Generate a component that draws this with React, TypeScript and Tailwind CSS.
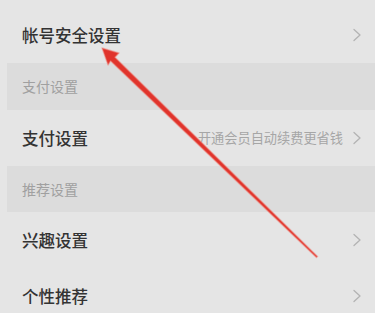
import { ReactNode } from 'react';

const Chevron = () => (
  <svg width="10" height="14" viewBox="0 0 10 14" className="shrink-0">
    <polyline points="2,1.5 8,7 2,12.5" fill="none" stroke="#b3b3b3" strokeWidth="1.3" strokeLinecap="round" strokeLinejoin="round" />
  </svg>
);

const Row = ({ title, extra }: { title: string; extra?: ReactNode }) => (
  <div className="flex items-center h-[56px] pl-[22px] pr-[13px]">
    <span className="text-[16.5px] font-medium text-[#333333]">{title}</span>
    <div className="ml-auto flex items-center gap-[9px]">
      {extra && <span className="text-[13.2px] text-[#a6a6a6]">{extra}</span>}
      <Chevron />
    </div>
  </div>
);

const Header = ({ title, h }: { title: string; h: string }) => (
  <div className={`ml-[7px] flex items-center pl-[15px] bg-[#dcdcdc] ${h}`}>
    <span className="text-[14px] text-[#a0a0a0]">{title}</span>
  </div>
);

// red annotation arrow drawn over the list
const Arrow = () => (
  <svg className="absolute inset-0 pointer-events-none" width="375" height="313" viewBox="0 0 375 313">
    <polygon
      points="102,48 119,53 115,57.2 317.6,256.4 316.4,257.6 110.6,61 108,65"
      fill="#e0342c"
      stroke="#f08a80"
      strokeOpacity="0.5"
      strokeWidth="1.4"
      strokeLinejoin="round"
    />
  </svg>
);

export default function App() {
  return (
    <div
      className="relative w-[375px] h-[313px] overflow-hidden bg-[#e5e5e5]"
      style={{ fontFamily: '"Noto Sans CJK SC", "Noto Sans", sans-serif' }}
    >
      <div className="pt-[7px]">
        <Row title="帐号安全设置" />
        <Header title="支付设置" h="h-[47px]" />
        <Row title="支付设置" extra="开通会员自动续费更省钱" />
        <Header title="推荐设置" h="h-[46px]" />
        <Row title="兴趣设置" />
        <Row title="个性推荐" />
      </div>
      <Arrow />
    </div>
  );
}
